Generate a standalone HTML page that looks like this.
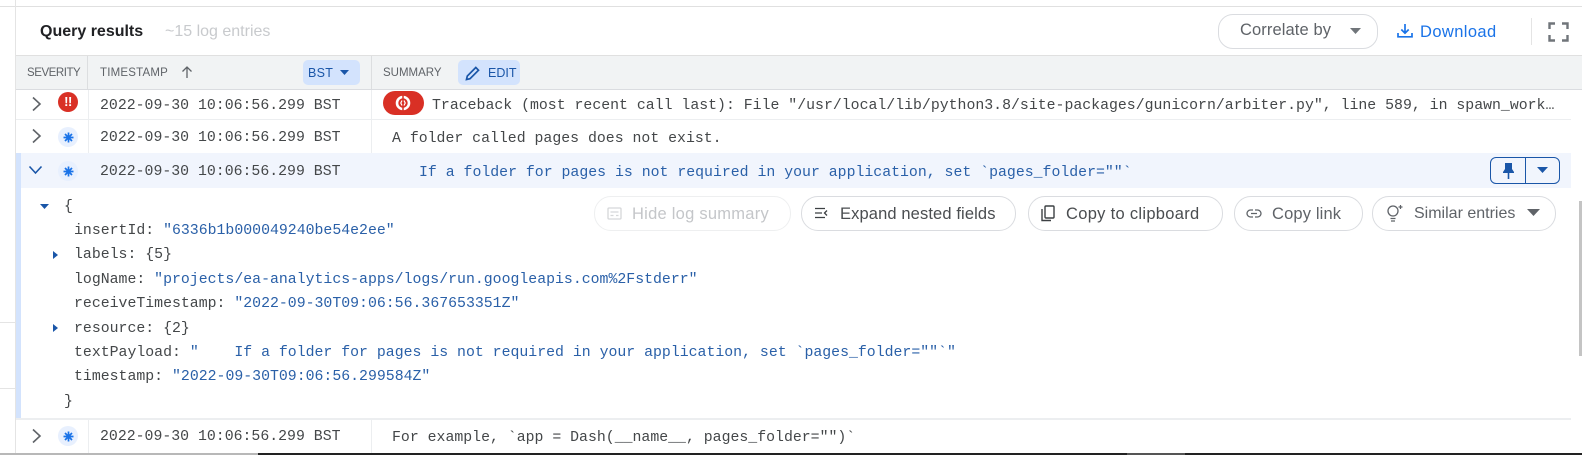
<!DOCTYPE html>
<html><head><meta charset="utf-8">
<style>
html,body{margin:0;padding:0;background:#fff}
#p{position:relative;width:1582px;height:455px;overflow:hidden;background:#fff;font-family:"Liberation Sans",sans-serif;color:#3c4043}
#p div,#p svg{position:absolute}
.m{font-family:"Liberation Mono",monospace;font-size:14.85px;line-height:20px;height:20px;white-space:pre;color:#444749}
.b{color:#2a60a8}
.btn{border:1px solid #dadce0;border-radius:17px;height:35px;box-sizing:border-box;background:#fff;top:196px}
.t{white-space:nowrap;line-height:20px;height:20px}
.h{font-size:11.5px;color:#5f6368}
.a{font-size:16.5px;color:#4a4d50;top:204px}
</style></head><body><div id="p">
<!-- frame -->
<div style="left:0;top:6px;width:1582px;height:1px;background:#e0e0e0"></div>
<div style="left:15px;top:0;width:1px;height:453px;background:#e4e4e4"></div>
<div style="left:0;top:322px;width:15px;height:1px;background:#e4e4e4"></div>
<div style="left:0;top:388px;width:15px;height:1px;background:#e4e4e4"></div>

<!-- title bar -->
<div class="t" style="left:40px;top:22px;font-size:16px;font-weight:bold;color:#202124">Query results</div>
<div class="t" style="left:165px;top:22px;font-size:16px;color:#c8cacd">~15 log entries</div>
<div class="btn" style="left:1218px;top:14px;width:160px;border-radius:15px"></div>
<div class="t" style="left:1240px;top:20px;font-size:16.5px;color:#5f6368;letter-spacing:.1px">Correlate by</div>
<svg style="left:1350px;top:28px" width="11" height="7"><path d="M0 0h11L5.500 6z" fill="#70757a"/></svg>
<svg style="left:1397px;top:23px" width="16" height="15" viewBox="0 0 16 15"><path d="M8 1v9M4.300 6.500L8 10.200l3.700-3.700M1 10v3.800h14V10" fill="none" stroke="#1a73e8" stroke-width="1.700"/></svg>
<div class="t" style="left:1420px;top:22px;font-size:16.5px;color:#1a73e8;letter-spacing:.4px">Download</div>
<div style="left:1531px;top:18px;width:1px;height:27px;background:#e4e4e4"></div>
<svg style="left:1548px;top:22px" width="21" height="20" viewBox="0 0 21 20"><path d="M1.500 7V1.500H7M14 1.500h5.500V7M1.500 13v5.500H7M14 18.500h5.500V13" fill="none" stroke="#70757a" stroke-width="2.400"/></svg>

<!-- header -->
<div style="left:16px;top:55px;width:1566px;height:35px;background:#f1f3f4;border-top:1px solid #e0e0e0;border-bottom:1px solid #dadce0;box-sizing:border-box"></div>
<div style="left:87px;top:56px;width:1px;height:33px;background:#dcdee0"></div>
<div style="left:371px;top:56px;width:1px;height:33px;background:#dcdee0"></div>
<div class="t h" style="left:27px;top:63px;letter-spacing:-.45px">SEVERITY</div>
<div class="t h" style="left:100px;top:63px;letter-spacing:.2px">TIMESTAMP</div>
<svg style="left:180px;top:65px" width="14" height="14" viewBox="0 0 14 14"><path d="M7 13V2M2.500 6.500L7 2l4.500 4.500" fill="none" stroke="#5f6368" stroke-width="1.300"/></svg>
<div style="left:303px;top:60px;width:57px;height:25px;background:#d3e3fd;border-radius:5px"></div>
<div class="t" style="left:308px;top:63px;font-size:12.500px;color:#1a56a8;letter-spacing:.3px">BST</div>
<svg style="left:340px;top:70px" width="9" height="6"><path d="M0 0h9L4.500 5z" fill="#1a56a8"/></svg>
<div class="t h" style="left:383px;top:63px">SUMMARY</div>
<div style="left:458px;top:60px;width:62px;height:25px;background:#d3e3fd;border-radius:5px"></div>
<svg style="left:465px;top:65px" width="16" height="16" viewBox="0 0 16 16"><path d="M1.500 14.500l.8-3.500 8.500-8.500 2.700 2.700-8.500 8.500z" fill="none" stroke="#1a56a8" stroke-width="1.700"/></svg>
<div class="t" style="left:488px;top:63px;font-size:12.500px;color:#1a56a8">EDIT</div>

<!-- row lines -->
<div style="left:16px;top:119px;width:1555px;height:1px;background:#eceef0"></div>
<div style="left:88px;top:90px;width:1px;height:64px;background:#eceef0"></div>
<div style="left:371px;top:90px;width:1px;height:64px;background:#eceef0"></div>

<!-- row 1 -->
<svg style="left:31px;top:96px" width="11" height="16" viewBox="0 0 11 16"><path d="M2 1.500L9 8l-7 6.500" fill="none" stroke="#5f6368" stroke-width="1.600"/></svg>
<div style="left:58px;top:92px;width:20px;height:20px;border-radius:50%;background:#d93025"></div>
<div style="left:58px;top:92px;width:20px;height:20px;line-height:20px;text-align:center;color:#fff;font-size:13px;font-weight:bold;letter-spacing:-.5px">!!</div>
<div class="m" style="left:100px;top:96px">2022-09-30 10:06:56.299 BST</div>
<div style="left:383px;top:91px;width:41px;height:24px;border-radius:12px;background:#d93025"></div>
<svg style="left:394px;top:94px" width="18" height="18" viewBox="0 0 18 18"><circle cx="9" cy="9" r="6" fill="none" stroke="#fff" stroke-width="2.600"/><path d="M9 1.500v3M9 13.500v3" stroke="#d93025" stroke-width="1.500"/><path d="M8 6.500L6.800 9 8 11.500M10 6.500L11.200 9 10 11.500" fill="none" stroke="#fff" stroke-width="1.200"/></svg>
<div class="m" style="left:432px;top:96px">Traceback (most recent call last): File "/usr/local/lib/python3.8/site-packages/gunicorn/arbiter.py", line 589, in spawn_work…</div>

<!-- row 2 -->
<svg style="left:31px;top:128px" width="11" height="16" viewBox="0 0 11 16"><path d="M2 1.500L9 8l-7 6.500" fill="none" stroke="#5f6368" stroke-width="1.600"/></svg>
<div style="left:58px;top:127px;width:20px;height:20px;border-radius:50%;background:#e8f0fe"></div>
<svg style="left:63px;top:132px" width="11" height="11" viewBox="0 0 11 11"><path d="M5.500 .5v10M.5 5.500h10M2 2l7 7M9 2L2 9" stroke="#1a73e8" stroke-width="1.700"/></svg>
<div class="m" style="left:100px;top:128px">2022-09-30 10:06:56.299 BST</div>
<div class="m" style="left:392px;top:129px">A folder called pages does not exist.</div>

<!-- row 3 expanded -->
<div style="left:16px;top:153px;width:1555px;height:35px;background:#f1f5fd"></div>
<div style="left:16px;top:153px;width:5px;height:266px;background:#d3e3fd"></div>
<svg style="left:28px;top:165px" width="15" height="10" viewBox="0 0 15 10"><path d="M1.500 1.500L7.500 8l6-6.500" fill="none" stroke="#1a56a8" stroke-width="1.600"/></svg>
<div style="left:58px;top:161px;width:20px;height:20px;border-radius:50%;background:#e8f0fe"></div>
<svg style="left:63px;top:166px" width="11" height="11" viewBox="0 0 11 11"><path d="M5.500 .5v10M.5 5.500h10M2 2l7 7M9 2L2 9" stroke="#1a73e8" stroke-width="1.700"/></svg>
<div class="m" style="left:100px;top:162px">2022-09-30 10:06:56.299 BST</div>
<div class="m b" style="left:419px;top:163px">If a folder for pages is not required in your application, set `pages_folder=""`</div>
<div style="left:1490px;top:157px;width:70px;height:27px;box-sizing:border-box;border:1px solid #1a56a8;border-radius:6px"></div>
<div style="left:1525px;top:157px;width:1px;height:27px;background:#1a56a8"></div>
<svg style="left:1502px;top:162px" width="13" height="17" viewBox="0 0 13 17"><path d="M3 1h7v6l2 3v1H1v-1l2-3zM5.700 11h1.600v6H5.700z" fill="#1a56a8"/></svg>
<svg style="left:1537px;top:167px" width="11" height="7"><path d="M0 0h11L5.500 6z" fill="#1a56a8"/></svg>

<!-- action buttons -->
<div class="btn" style="left:594px;width:197px;border-color:#eeeff0"></div>
<svg style="left:607px;top:206px" width="15" height="15" viewBox="0 0 15 15"><rect x="1" y="2" width="13" height="11" rx="1" fill="none" stroke="#d5d7d9" stroke-width="1.300"/><path d="M3.500 6h8M3.500 9.500h3M9 9.500h2.500" stroke="#d5d7d9" stroke-width="1.300"/></svg>
<div class="t a" style="left:632px;color:#c4c6c9;letter-spacing:.25px">Hide log summary</div>

<div class="btn" style="left:801px;width:215px"></div>
<svg style="left:814px;top:206px" width="14" height="14" viewBox="0 0 14 14"><path d="M1 2.500h10M1 7h7M1 11.500h10M13 4.500L10.500 7l2.500 2.500" fill="none" stroke="#3c4043" stroke-width="1.300"/></svg>
<div class="t a" style="left:840px;letter-spacing:.12px">Expand nested fields</div>

<div class="btn" style="left:1028px;width:195px"></div>
<svg style="left:1041px;top:205px" width="14" height="17" viewBox="0 0 14 17"><rect x="4" y="1" width="9" height="12" rx="1" fill="none" stroke="#3c4043" stroke-width="1.400"/><path d="M1 4v11.500h9" fill="none" stroke="#3c4043" stroke-width="1.400"/></svg>
<div class="t a" style="left:1066px;letter-spacing:.3px">Copy to clipboard</div>

<div class="btn" style="left:1234px;width:129px"></div>
<svg style="left:1246px;top:209px" width="16" height="9" viewBox="0 0 16 9"><path d="M7 1H4.500a3.500 3.500 0 0 0 0 7H7M9 1h2.500a3.500 3.500 0 0 1 0 7H9M5 4.500h6" fill="none" stroke="#5f6368" stroke-width="1.300"/></svg>
<div class="t a" style="left:1272px;color:#5f6368;letter-spacing:.15px">Copy link</div>

<div class="btn" style="left:1372px;width:184px"></div>
<svg style="left:1386px;top:203px" width="20" height="20" viewBox="0 0 20 20"><circle cx="7" cy="8" r="5" fill="none" stroke="#5f6368" stroke-width="1.300"/><path d="M4.500 15.500h5M5 18h4M14.500 2v4M12.500 4h4" stroke="#5f6368" stroke-width="1.200"/></svg>
<div class="t a" style="left:1414px;font-size:16px;color:#5f6368">Similar entries</div>
<svg style="left:1527px;top:209px" width="13" height="8"><path d="M0 0h13L6.500 7z" fill="#5f6368"/></svg>

<div style="left:1579px;top:201px;width:3px;height:155px;background:#c4c4c4"></div>

<!-- json -->
<svg style="left:40px;top:204px" width="10" height="6"><path d="M0 0h9L4.500 5z" fill="#1a56a8"/></svg>
<div class="m" style="left:64px;top:197px">{</div>
<div class="m" style="left:74px;top:221px">insertId: <span class="b">"6336b1b000049240be54e2ee"</span></div>
<svg style="left:53px;top:251px" width="6" height="9"><path d="M0 0v8l5-4z" fill="#1a56a8"/></svg>
<div class="m" style="left:74px;top:245px">labels: {5}</div>
<div class="m" style="left:74px;top:270px">logName: <span class="b">"projects/ea-analytics-apps/logs/run.googleapis.com%2Fstderr"</span></div>
<div class="m" style="left:74px;top:294px">receiveTimestamp: <span class="b">"2022-09-30T09:06:56.367653351Z"</span></div>
<svg style="left:53px;top:324px" width="6" height="9"><path d="M0 0v8l5-4z" fill="#1a56a8"/></svg>
<div class="m" style="left:74px;top:319px">resource: {2}</div>
<div class="m" style="left:74px;top:343px">textPayload: <span class="b">"    If a folder for pages is not required in your application, set `pages_folder=""`"</span></div>
<div class="m" style="left:74px;top:367px">timestamp: <span class="b">"2022-09-30T09:06:56.299584Z"</span></div>
<div class="m" style="left:64px;top:392px">}</div>

<!-- row 4 -->
<div style="left:16px;top:418px;width:1555px;height:2px;background:#eceef0"></div>
<div style="left:88px;top:420px;width:1px;height:33px;background:#eceef0"></div>
<div style="left:371px;top:420px;width:1px;height:33px;background:#eceef0"></div>
<svg style="left:31px;top:428px" width="11" height="16" viewBox="0 0 11 16"><path d="M2 1.500L9 8l-7 6.500" fill="none" stroke="#5f6368" stroke-width="1.600"/></svg>
<div style="left:58px;top:426px;width:20px;height:20px;border-radius:50%;background:#e8f0fe"></div>
<svg style="left:63px;top:431px" width="11" height="11" viewBox="0 0 11 11"><path d="M5.500 .5v10M.5 5.500h10M2 2l7 7M9 2L2 9" stroke="#1a73e8" stroke-width="1.700"/></svg>
<div class="m" style="left:100px;top:427px">2022-09-30 10:06:56.299 BST</div>
<div class="m" style="left:392px;top:428px">For example, `app = Dash(__name__, pages_folder="")`</div>

<!-- bottom -->
<div style="left:0;top:453px;width:258px;height:2px;background:#b8b8b8"></div>
<div style="left:258px;top:453px;width:1324px;height:2px;background:#222"></div>
<div style="left:1127px;top:453px;width:58px;height:2px;background:#555"></div>
</div></body></html>
